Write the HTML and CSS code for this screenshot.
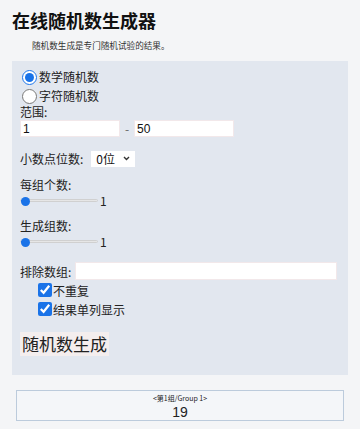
FILE: index.html
```html
<!DOCTYPE html>
<html lang="zh">
<head>
<meta charset="utf-8">
<link rel="stylesheet" href="styles.css">
</head>
<body>
<h1 class="title">在线随机数生成器</h1>
<p class="subtitle">随机数生成是专门随机试验的结果。</p>
<div class="panel">
  <label class="radio-row"><input type="radio" name="t" checked>数学随机数</label>
  <label class="radio-row"><input type="radio" name="t">字符随机数</label>
  <div class="label">范围:</div>
  <div class="range-row">
    <input class="txt short" type="text" value="1">
    <span class="dash">-</span>
    <input class="txt short" type="text" value="50">
  </div>
  <div class="select-row">
    <span>小数点位数:</span>
    <span class="sel-wrap">
      <select class="sel"><option>0位</option></select>
      <svg class="chev" width="7" height="5" viewBox="0 0 7 5"><path d="M1 1 L3.5 3.5 L6 1" fill="none" stroke="#333" stroke-width="1.4"/></svg>
    </span>
  </div>
  <div class="label lbl-gap">每组个数:</div>
  <div class="slider-row"><input class="slider" type="range" min="1" max="100" value="1"><span>1</span></div>
  <div class="label lbl-gap">生成组数:</div>
  <div class="slider-row"><input class="slider" type="range" min="1" max="100" value="1"><span>1</span></div>
  <div class="exclude-row"><span>排除数组:</span><input class="txt long" type="text"></div>
  <label class="check-row"><input type="checkbox" checked>不重复</label>
  <label class="check-row"><input type="checkbox" checked>结果单列显示</label>
  <button class="btn">随机数生成</button>
</div>
<div class="result">
  <div class="group">&lt;第1组/Group 1&gt;</div>
  <div class="num">19</div>
</div>
</body>
</html>
```
FILE: styles.css
```css
html, body {
  margin: 0;
  padding: 0;
}
body {
  background: #f4f5f7;
  font-family: "Noto Sans CJK SC", "Noto Sans", sans-serif;
  color: #222;
  padding: 0 12px;
  width: 336px;
}
.title {
  margin: 0;
  padding-top: 8px;
  font-size: 18px;
  line-height: 24px;
  font-weight: 700;
  color: #111;
}
.subtitle {
  margin: 7px 0 0 20px;
  font-size: 8.6px;
  line-height: 12px;
  color: #333;
}
.panel {
  margin-top: 10px;
  background: #e2e7ef;
  padding: 6px 8px 19px 8px;
  display: flex;
  flex-direction: column;
  align-items: flex-start;
  font-size: 12px;
  color: #222;
}
.radio-row {
  display: flex;
  align-items: center;
  height: 18px;
  line-height: 18px;
  margin-top: 1px;
}
.radio-row input {
  width: 15px;
  height: 15px;
  margin: 0 2px 0 2px;
  accent-color: #1a73e8;
}
.label {
  line-height: 14px;
  height: 14px;
}
.range-row {
  display: flex;
  align-items: center;
  margin-top: 1px;
}
.txt {
  box-sizing: border-box;
  height: 17px;
  border: 1px solid #f2e8ea;
  background: #fff;
  font-family: "Liberation Sans", "Noto Sans CJK SC", sans-serif;
  font-size: 12px;
  padding: 0 2px;
  margin: 0;
  color: #111;
  outline: none;
}
.short {
  width: 100px;
}
.dash {
  width: 14px;
  text-align: center;
  color: #666;
}
.select-row {
  display: flex;
  align-items: center;
  margin-top: 13px;
  height: 16px;
}
.sel-wrap {
  position: relative;
  margin-left: 8px;
  display: inline-block;
}
.sel {
  appearance: none;
  -webkit-appearance: none;
  border: none;
  background: #fff;
  width: 44px;
  height: 16px;
  font-family: "Noto Sans CJK SC", sans-serif;
  font-size: 12px;
  line-height: 16px;
  padding: 0 0 0 5px;
  color: #111;
}
.chev {
  position: absolute;
  right: 5px;
  top: 6px;
}
.lbl-gap {
  margin-top: 12px;
}
.slider-row {
  display: flex;
  align-items: center;
  height: 14px;
  margin-top: 1px;
}
.slider {
  -webkit-appearance: none;
  appearance: none;
  width: 78px;
  height: 9px;
  margin: 0 2px 0 0;
  background: transparent;
}
.slider::-webkit-slider-runnable-track {
  height: 3px;
  border-radius: 2px;
  background: linear-gradient(to right, #1a73e8 0 6px, #e6e6e6 6px);
  border: 1px solid #d0d0d0;
  box-sizing: border-box;
}
.slider::-webkit-slider-thumb {
  -webkit-appearance: none;
  width: 9px;
  height: 9px;
  border-radius: 50%;
  background: #1a73e8;
  margin-top: -3px;
  border: none;
}
.exclude-row {
  display: flex;
  align-items: center;
  margin-top: 14px;
  width: 100%;
}
.long {
  width: 262px;
  height: 18px;
  margin-left: 4px;
}
.check-row {
  display: flex;
  align-items: center;
  height: 18px;
  margin-left: 18px;
  margin-top: 1px;
}
.check-row input {
  width: 14px;
  height: 14px;
  margin: 0 1px 0 0;
  accent-color: #1a73e8;
}
.btn {
  margin-top: 14px;
  font-family: "Noto Sans CJK SC", sans-serif;
  font-size: 17px;
  line-height: 22px;
  padding: 1px 2px;
  border: none;
  background: #f4eeee;
  color: #222;
}
.result {
  margin: 15px 4px 0 4px;
  border: 1px solid #bccbdc;
  background: #f4f6f9;
  height: 29px;
  display: flex;
  flex-direction: column;
  align-items: center;
}
.group {
  font-size: 7px;
  line-height: 11px;
  margin-top: 2px;
}
.num {
  font-family: "Liberation Sans", sans-serif;
  font-size: 14px;
  line-height: 16px;
}
```
